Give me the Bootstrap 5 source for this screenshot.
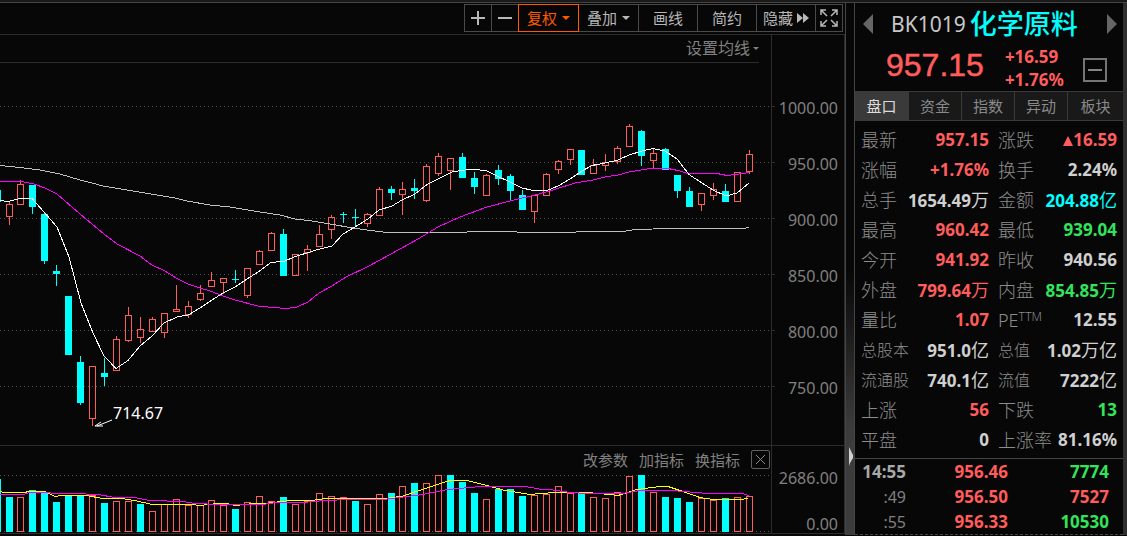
<!DOCTYPE html>
<html lang="zh-CN">
<head>
<meta charset="utf-8">
<meta name="viewport" content="width=device-width, initial-scale=1">
<title>化学原料 BK1019</title>
<link href="https://cdn.jsdelivr.net/npm/bootstrap@5.3.0/dist/css/bootstrap.min.css" rel="stylesheet">
<style>
:root{--up:#ff5c5c;--down:#33e35c;--cy:#00ffff;--dim:#808080;--val:#d0d0d0;--rule:#2c2c2c}
body{background:#070707;color:var(--val);font-family:"Noto Sans","Noto Sans CJK SC",sans-serif;font-size:16px;line-height:24px}
.app{min-height:100vh;border-top:2px solid #1a1a1a}
.app-in{border-top:1px solid #444}
button{background:none;border:0;padding:0;color:inherit}
/* toolbar */
.tools{height:31px;padding:1px 2px 0 0}
.tools button{height:28px;border:1px solid #4a4a4a;margin-left:-1px;font-size:15px;color:#b8b8b8;line-height:26px;display:flex;align-items:center;justify-content:center}
.tools .on{border-color:#ff5a00;color:#ff5a00;position:relative}
.w-s{width:28px}.w-m{width:60px}.w-a{width:61px}
.car{border:4px solid transparent;border-top-color:currentColor;border-bottom:0;margin-left:5px}
.car-s{border-width:3px;border-bottom:0;margin-left:3px}
/* chart */
.chart{border-top:1px solid var(--rule);border-right:1px solid var(--rule)}
.plot{min-width:0;border-right:1px solid var(--rule)}
.axis{width:72px;color:var(--dim);text-align:right}
.ma-bar{height:28px;margin-right:12px;border-bottom:1px solid var(--rule);color:var(--dim);font-size:16px;line-height:27px}
.kline{display:block;width:100%;height:382px}
.vol{display:block;width:100%;height:60px}
.axis-price{height:410px;padding-top:44px}
.axis li{height:56px;line-height:58px;padding-right:6px;background:linear-gradient(var(--rule),var(--rule)) 0 27px/3px 1px no-repeat}
.pane2{border-top:1px solid var(--rule);border-bottom:1px solid var(--rule);border-right:1px solid var(--rule)}
.ind{height:27px;gap:11px;padding-right:1px;color:var(--dim);font-size:15px;align-items:center}
.xbox{border:1px solid #606060!important;border-radius:2px;width:19px;height:19px;display:grid;place-items:center}
.axis-vol{height:87px;padding-top:23px}
.axis-vol div{padding-right:6px;line-height:18px}
/* divider */
.split{width:9px;background:linear-gradient(#070707 50%,#3c3c3c 80%);border-left:1px solid #444}
/* side panel */
.side{width:273px;border-left:1px solid #444;border-right:4px solid #303030}
.head{height:88px}
.arr{border:9px solid transparent;width:0;height:0}
.code{font-size:21px;color:#c8c8c8}
.name{font-size:27px;font-weight:500;color:var(--cy)}
.big{font:32px/36px "Liberation Sans",sans-serif;color:var(--up);-webkit-text-stroke:.5px var(--up);padding-bottom:6px}
.chg{font-size:17px;font-weight:700;line-height:23px;color:var(--up);margin-left:21px}
.mini{border:2px solid #757575!important;width:24px;height:24px;display:grid;place-items:center;margin:4px 16px 0 0}
.tabs{border:1px solid #3a3a3a;border-width:1px 0}
.tabs button{flex:0 0 53px;height:28px;background:#191919;color:#8a8a8a;font-size:15px;border-left:1px solid #3a3a3a}
.tabs button:last-child{flex:1 1 0}
.tabs button:first-child{background:#3a3a3a;color:#ddd;border-left:0}
.quote{width:100%;table-layout:fixed;margin-top:4px}
.quote tr{height:30px}
.quote th,.quote td,.ticks td{padding:0;white-space:nowrap;line-height:24px}
.quote th{font-size:18px;font-weight:300;color:#8c8c8c;padding-left:6px}
.quote th+td+th{padding-left:9px}
.quote th.sm{font-size:16px}
.quote th sup{font-size:12px;top:-6px;line-height:0}
.quote td,.ticks td{font-size:17px;font-weight:700;text-align:right;color:var(--val)}
.quote td:last-child{padding-right:6px}
.quote td i{font-style:normal;font-weight:400;font-size:18px}
.quote col.a{width:42px}.quote col.b{width:92px}.quote col.c{width:53px}
.quote .up,.ticks .up{color:var(--up)}.quote .down,.ticks .down{color:var(--down)}.quote .cy{color:var(--cy)}
.ticks{width:100%;table-layout:fixed;border-collapse:separate;border-spacing:0;margin-top:3px;border-top:1px solid #444;border-bottom:1px dashed #444}
.ticks td{height:25px}
.ticks td:first-child{width:51px;font-weight:400;font-size:16px;color:var(--dim)}
.ticks tr:first-child td:first-child{font-weight:700;font-size:17px;color:#a8a8a8}
.ticks td:nth-child(2){width:102px}
.ticks td:last-child{padding-right:14px}
</style>
<script src="https://cdn.jsdelivr.net/npm/bootstrap@5.3.0/dist/js/bootstrap.bundle.min.js"></script>
</head>
<body>
<div class="app"><div class="app-in d-flex">
  <main class="flex-grow-1 d-flex flex-column" style="min-width:0">
    <div class="tools d-flex justify-content-end">
      <button class="w-s" aria-label="放大"><svg width="16" height="16"><path d="M1 8h14M8 1v14" stroke="#b8b8b8" stroke-width="2"/></svg></button>
      <button class="w-s" aria-label="缩小"><svg width="16" height="16"><path d="M1 8h14" stroke="#b8b8b8" stroke-width="2"/></svg></button>
      <button class="on w-a">复权<span class="car"></span></button>
      <button class="w-a">叠加<span class="car"></span></button>
      <button class="w-m">画线</button>
      <button class="w-m">简约</button>
      <button class="w-m">隐藏<svg class="ms-1" width="12" height="10"><path d="M0 0l6 5-6 5zM6 0l6 5-6 5z" fill="#b8b8b8"/></svg></button>
      <button class="w-s" aria-label="全屏"><svg width="18" height="18" fill="none" stroke="#b8b8b8" stroke-width="1.5"><path d="M1 6V1h5M1 1l6 6M12 1h5v5M17 1l-6 6M1 12v5h5M1 17l6-6M17 12v5h-5M17 17l-6-6"/></svg></button>
    </div>
    <div class="chart d-flex">
      <div class="plot flex-grow-1">
        <div class="ma-bar d-flex justify-content-end"><button class="d-flex align-items-center">设置均线<span class="car car-s"></span></button></div>
        <svg class="kline" id="kline" viewBox="0 63 771 382" preserveAspectRatio="none" shape-rendering="crispEdges"></svg>
      </div>
      <ul class="axis axis-price list-unstyled mb-0"><li>1000.00</li><li>950.00</li><li>900.00</li><li>850.00</li><li>800.00</li><li>750.00</li></ul>
    </div>
    <div class="pane2 d-flex">
      <div class="plot flex-grow-1">
        <div class="ind d-flex justify-content-end"><button>改参数</button><button>加指标</button><button>换指标</button><button class="xbox" aria-label="关闭"><svg width="11" height="11"><path d="M1 1l9 9M10 1l-9 9" stroke="#8a8a8a"/></svg></button></div>
        <svg class="vol" id="vol" viewBox="0 473 771 60" preserveAspectRatio="none" shape-rendering="crispEdges"></svg>
      </div>
      <div class="axis axis-vol d-flex flex-column justify-content-between"><div>2686.00</div><div>0.00</div></div>
    </div>
  </main>
  <div class="split d-flex align-items-end"><svg width="8" height="88"><path d="M3 0v19l1-3 3-5v-3l-3-6z" fill="#d0d0d0"/></svg></div>
  <aside class="side flex-shrink-0">
    <div class="head">
      <div class="d-flex align-items-center" style="height:42px">
        <button class="arr" style="border:10px solid transparent;border-left:0;border-right-color:#666;margin-left:8px" aria-label="上一个"></button>
        <span class="code flex-shrink-0" style="margin-left:18px">BK1019</span><span class="name ms-1">化学原料</span>
        <button class="arr ms-auto" style="border:10px solid transparent;border-right:0;border-left-color:#666;margin-right:6px" aria-label="下一个"></button>
      </div>
      <div class="d-flex align-items-center">
        <span class="big" style="margin-left:31px">957.15</span>
        <div class="chg">+16.59<br>+1.76%</div>
        <button class="mini ms-auto" aria-label="收起"><svg width="14" height="2"><path d="M0 1h14" stroke="#858585" stroke-width="2"/></svg></button>
      </div>
    </div>
    <div class="tabs d-flex"><button>盘口</button><button>资金</button><button>指数</button><button>异动</button><button>板块</button></div>
    <table class="quote"><colgroup><col class="a"><col class="b"><col class="c"><col></colgroup><tbody>
      <tr><th>最新</th><td class="up">957.15</td><th>涨跌</th><td class="up"><svg width="10" height="11"><path d="M5 0l5 10H0z" fill="#ff5c5c"/></svg>16.59</td></tr>
      <tr><th>涨幅</th><td class="up">+1.76%</td><th>换手</th><td>2.24%</td></tr>
      <tr><th>总手</th><td>1654.49<i>万</i></td><th>金额</th><td class="cy">204.88<i>亿</i></td></tr>
      <tr><th>最高</th><td class="up">960.42</td><th>最低</th><td class="down">939.04</td></tr>
      <tr><th>今开</th><td class="up">941.92</td><th>昨收</th><td>940.56</td></tr>
      <tr><th>外盘</th><td class="up">799.64<i>万</i></td><th>内盘</th><td class="down">854.85<i>万</i></td></tr>
      <tr><th>量比</th><td class="up">1.07</td><th>PE<sup>TTM</sup></th><td>12.55</td></tr>
      <tr><th class="sm">总股本</th><td>951.0<i>亿</i></td><th class="sm">总值</th><td>1.02<i>万亿</i></td></tr>
      <tr><th class="sm">流通股</th><td>740.1<i>亿</i></td><th class="sm">流值</th><td>7222<i>亿</i></td></tr>
      <tr><th>上涨</th><td class="up">56</td><th>下跌</th><td class="down">13</td></tr>
      <tr><th>平盘</th><td>0</td><th>上涨率</th><td>81.16%</td></tr>
    </tbody></table>
    <table class="ticks"><tbody>
      <tr><td>14:55</td><td class="up">956.46</td><td class="down">7774</td></tr>
      <tr><td>:49</td><td class="up">956.50</td><td class="up">7527</td></tr>
      <tr><td>:55</td><td class="up">956.33</td><td class="down">10530</td></tr>
    </tbody></table>
  </aside>
</div></div>
<script>
// each row: centre x, high, body top, body bottom, low, direction (1 = up), volume top, volume direction
const bars=[
[-3,190,190,202,202,0,479,0],[9,202,204,217,225,1,497,0],[20,180,184,205,205,1,497,1],[32,185,185,207,214,0,490,0],[44,213,214,261,264,0,492,0],
[56,265,271,274,286,0,502,0],[68,296,296,355,355,0,495,0],[80,356,362,403,405,0,495,0],[92,366,366,419,426,1,495,1],[104,358,373,377,386,0,503,0],
[116,336,339,371,371,1,501,1],[128,307,315,341,342,1,501,1],[140,317,329,338,343,1,504,0],[152,317,319,332,332,1,511,1],[164,313,313,333,338,1,504,1],
[176,285,309,312,312,1,499,1],[188,301,306,315,318,1,505,1],[200,285,293,300,301,1,505,1],[211,272,280,287,287,1,500,1],[223,278,278,283,294,1,505,1],
[235,270,279,280,283,0,509,0],[247,268,268,296,298,1,502,1],[259,250,251,265,265,1,496,1],[271,232,233,251,251,1,501,1],[283,229,234,276,276,0,497,0],
[295,254,254,276,276,1,504,1],[307,245,249,253,271,1,501,1],[319,225,234,247,247,1,493,1],[331,215,217,230,239,1,496,1],[343,212,214,215,223,0,497,1],
[355,209,217,218,226,0,501,0],[367,213,214,224,227,1,504,1],[379,187,189,216,216,1,494,1],[391,186,189,193,200,0,493,0],[402,182,189,195,215,1,486,1],
[414,179,188,191,199,0,483,0],[426,164,166,201,202,1,483,1],[438,153,156,174,176,1,475,1],[450,158,158,171,190,1,475,0],[462,153,157,178,178,0,482,0],
[474,172,178,187,194,0,493,0],[486,174,175,196,196,1,499,1],[498,165,170,179,185,0,489,0],[510,174,176,191,201,0,489,0],[522,190,195,210,210,0,496,0],
[534,195,195,212,223,1,495,1],[546,173,174,196,196,1,494,1],[558,160,161,170,174,1,486,1],[570,149,149,160,165,1,493,1],[581,150,150,175,175,0,493,0],
[593,159,165,174,174,1,497,1],[605,154,162,166,171,1,498,1],[617,146,148,162,164,1,492,1],[629,124,126,147,147,1,476,1],[641,130,131,156,166,0,475,0],
[653,148,153,161,169,1,492,1],[665,148,149,170,170,0,497,0],[677,175,175,191,198,0,498,0],[689,187,191,207,207,0,502,0],[701,193,193,205,211,1,498,1],
[713,183,189,196,200,1,500,1],[725,184,191,202,202,0,498,0],[737,172,172,202,202,1,497,1],[749,150,154,172,174,1,496,1]];
const C='#00ffff',R='#ff5c5c';
const rect=(x,y,w,h,f)=>`<rect x="${x}" y="${y}" width="${w}" height="${h}" fill="${f}"/>`;
const box=(x,t,b,up)=>up?`<rect x="${x-2.5}" y="${t+.5}" width="6" height="${b-t-1}" fill="none" stroke="${R}"/>`:rect(x-3,t,7,b-t,C);
const line=(p,c)=>`<polyline points="${p}" fill="none" stroke="${c}"/>`;
const grid=y=>`<path d="M0 ${y}.5H771" stroke="#505050" stroke-dasharray="1 3"/>`;
let k=[106,162,218,274,330,386].map(grid).join('');
for(const [x,h,t,b,l,u] of bars){const f=u?R:C;k+=rect(x,h,1,t-h,f)+rect(x,b,1,l-b,f)+box(x,t,b,u)}
k+=line('0,165.5 20,167.5 40,170 60,174 80,180 92,183 103,186 115,188 145,193 175,198 187,201 210,205 230,207 260,212 280,215 295,219 312,221 330,224 353,228 367,230 387,232.5 455,232.5 480,231.5 503,231.5 530,232.5 563,232.5 590,231.5 623,231.5 635,229.5 671,228.5 743,228.5 749,227.5','#c0c0c0');
k+=line('0,181.5 20,181.5 27,182.5 34,184 45,188 57,194 80,214 104,234 117,244 140,256 152,265 165,271 176,278 188,284 200,288 210,291 223,296 235,300 258,306 273,307.5 287,308.5 297,307 308,302 319,293 332,286 346,277 367,267 380,260 400,249 418,239 438,227 460,217 487,207 510,201 535,195 553,190 575,183 593,180 605,177 618,175 629,172 650,168.5 668,168.5 678,170.5 688,173.5 717,173.5 727,175.5 743,173.5 749,172.5','#ff00ff');
k+=line('0,200.5 8,201.5 20,198.5 32,198.5 44,212 57,227 69,257 81,303 93,333 104,356 116,368.5 128,360.5 140,346 152,336 164,323 177,317 188,315 200,308 212,300 223,293 235,287 247,279 258,272 271,262.5 285,261 295,256.5 307,253 318,249.5 332,246 343,234 355,227 368,219 379,210 392,206 402,200 415,194 427,184.5 438,179 452,172 468,169.5 477,169.5 487,171 497,176 510,182 522,188 533,190.5 547,190.5 558,186 570,179 582,171 592,165.5 605,163 618,160 629,155 642,151 653,148.5 665,151 677,159 689,174.5 702,183 713,190 726,196 737,193 749,183','#ffffff');
k+='<g shape-rendering="auto"><path d="M112 420L97 426M95 426l6-4M95 426h8" stroke="#fff" fill="none"/><text x="113" y="419" font-size="16" fill="#fff">714.67</text></g>';
document.getElementById('kline').innerHTML=k;
let v=grid(475)+grid(531);
for(const b of bars)v+=box(b[0],b[6],532,b[7]);
v+=line('0,491.5 4,492.5 26,492.5 27,491.5 45,491.5 55,496.5 62,495.5 86,495.5 103,498.5 122,498.5 137,501 152,504.5 193,504.5 199,505.5 218,503.5 226,503.5 236,505.5 253,503.5 265,503.5 273,502.5 290,500.5 312,500.5 325,498.5 385,498.5 403,496 413,492.5 450,480.5 467,480.5 487,485.5 503,490 530,494.5 541,493.5 555,492.5 587,492.5 610,494.5 618,495.5 637,489.5 660,486.5 668,486.5 680,490.5 700,497.5 713,499.5 740,499.5 748,498.5','#ffff00');
v+=line('0,494.5 23,494.5 30,492.5 50,492.5 52,493.5 74,493.5 98,494.5 115,497.5 134,497.5 150,500.5 183,501.5 195,503.5 218,504.5 265,504.5 267,503.5 280,502.5 303,502.5 325,500.5 350,499.5 383,499.5 403,497 423,494.5 447,489.5 470,487.5 480,486.5 525,486.5 542,489.5 553,490 570,492.5 587,493.5 622,493.5 640,490.5 672,490.5 708,493.5 742,493.5 749,495.5','#ff00ff');
document.getElementById('vol').innerHTML=v;
</script>
</body>
</html>
